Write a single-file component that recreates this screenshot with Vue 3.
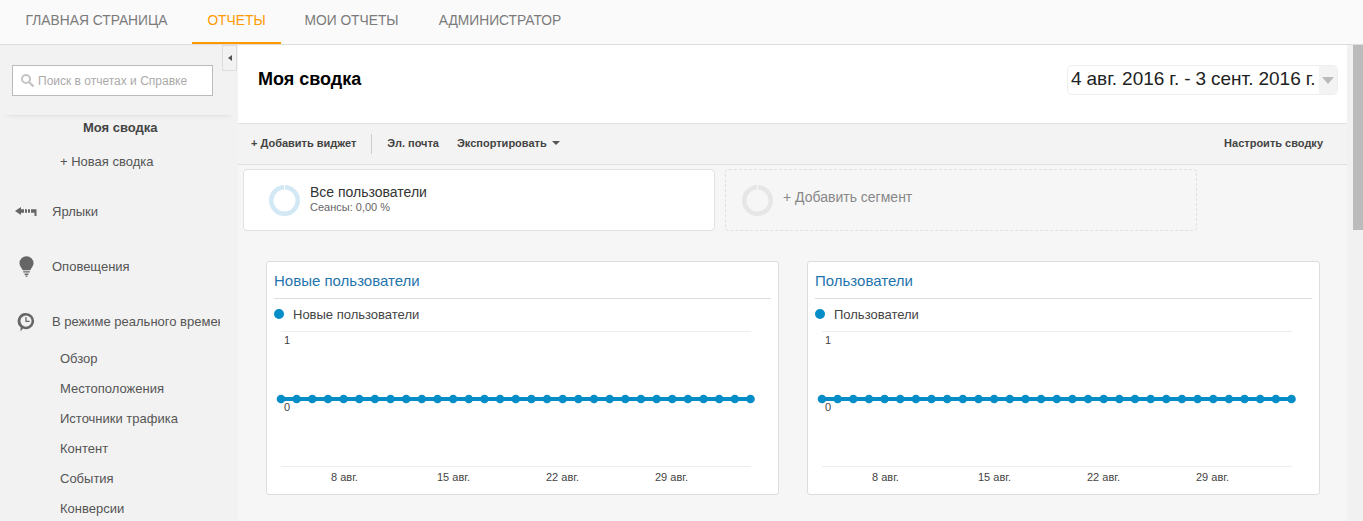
<script setup>
const sideTop = [
  { label: 'Ярлыки', icon: 'tag' },
  { label: 'Оповещения', icon: 'bulb' },
  { label: 'В режиме реального времени', icon: 'clock' }
];
const subItems = ['Обзор', 'Местоположения', 'Источники трафика', 'Контент', 'События', 'Конверсии'];
const nav = [
  { label: 'ГЛАВНАЯ СТРАНИЦА', width: 175 },
  { label: 'ОТЧЕТЫ', width: 89, active: true },
  { label: 'МОИ ОТЧЕТЫ', width: 125 },
  { label: 'АДМИНИСТРАТОР', width: 156 }
];

const widgets = ['Новые пользователи', 'Пользователи'];
const pointCount = 31;
const step = 15.65;
const points = Array.from({ length: pointCount }, (_, i) => 7 + i * step);
const ticks = [
  { label: '8 авг.', x: 57 },
  { label: '15 авг.', x: 163 },
  { label: '22 авг.', x: 272 },
  { label: '29 авг.', x: 381 }
];
</script>

<template>
  <div class="page">
    <header class="topnav">
      <a
        v-for="item in nav"
        :key="item.label"
        class="nav-item"
        :class="{ active: item.active }"
        :style="{ width: item.width + 'px' }"
      >{{ item.label }}</a>
    </header>

    <div class="body">
      <aside class="sidebar">
        <div class="search-wrap">
          <div class="search">
            <svg class="search-icon" width="15" height="15" viewBox="0 0 15 15">
              <circle cx="6" cy="6" r="4" fill="none" stroke="#c4c4c4" stroke-width="2" />
              <path d="M9 9l4.500 4.500" stroke="#c4c4c4" stroke-width="2.400" />
            </svg>
            <span>Поиск в отчетах и Справке</span>
          </div>
        </div>
        <button class="collapse"><span class="collapse-arrow"></span></button>

        <div class="side-current">Моя сводка</div>
        <div class="side-new">+ Новая сводка</div>

        <div v-for="item in sideTop" :key="item.label" class="side-row">
          <span class="side-icon">
            <svg v-if="item.icon === 'tag'" width="22" height="9" viewBox="0 0 22 9">
              <path d="M0 4l6-4v2.300h3v3.400H6V8z" fill="#666" />
              <path d="M10 2.300h2v3.400h-2zM13 2.300h2v3.400h-2zM16 2.300h5.500V9h-2V5.700H16z" fill="#666" />
            </svg>
            <svg v-else-if="item.icon === 'bulb'" width="15" height="21" viewBox="0 0 16 22">
              <path d="M8 0a7.500 7.500 0 0 1 7.500 7.500c0 3.400-2.600 5-3.500 7.500H4C3.100 12.500.5 10.900.5 7.500A7.500 7.500 0 0 1 8 0z" fill="#666" />
              <path d="M4.500 16h7v1.500h-7zM6 18.500h4V20H6zM7 20.500h2V22H7z" fill="#666" />
            </svg>
            <svg v-else width="18" height="20" viewBox="0 0 20 22">
              <path d="M10 1a9 9 0 1 1-3.500 17.300L4 21.500v-4.600A9 9 0 0 1 10 1z" fill="#666" />
              <circle cx="10" cy="10" r="6.200" fill="#f2f2f2" />
              <path d="M9.300 5.500h1.400v4h3.300v1.400H9.300z" fill="#666" />
            </svg>
          </span>
          <span class="side-label">{{ item.label }}</span>
        </div>

        <div v-for="item in subItems" :key="item" class="side-sub">{{ item }}</div>
      </aside>

      <main class="main">
        <section class="title-bar">
          <h1>Моя сводка</h1>
          <div class="date-picker">
            <span class="date-text">4 авг. 2016 г. - 3 сент. 2016 г.</span>
            <span class="date-arrow"><i></i></span>
          </div>
        </section>

        <section class="toolbar">
          <span class="tool tool-add">+ Добавить виджет</span>
          <span class="tool-divider"></span>
          <span class="tool tool-mail">Эл. почта</span>
          <span class="tool tool-export">Экспортировать <i class="caret"></i></span>
          <span class="tool tool-config">Настроить сводку</span>
        </section>

        <section class="segments">
          <div class="segment">
            <svg class="ring" width="31" height="31" viewBox="0 0 31 31">
              <circle cx="15.500" cy="15.500" r="13.250" fill="none" stroke="#d2e8f5" stroke-width="4.500" />
              <rect x="15" y="0" width="1" height="5" fill="#fff" />
            </svg>
            <div class="segment-text">
              <div class="segment-title">Все пользователи</div>
              <div class="segment-sub">Сеансы: 0,00 %</div>
            </div>
          </div>
          <div class="segment segment-add">
            <svg class="ring" width="31" height="31" viewBox="0 0 31 31">
              <circle cx="15.500" cy="15.500" r="13.250" fill="none" stroke="#e6e6e6" stroke-width="4.500" />
              <rect x="15" y="0" width="1" height="5" fill="#f6f6f6" />
            </svg>
            <div class="segment-add-label">+ Добавить сегмент</div>
          </div>
        </section>

        <section class="widgets">
          <article v-for="title in widgets" :key="title" class="widget">
            <h2 class="widget-title">{{ title }}</h2>
            <div class="legend"><span class="legend-dot"></span>{{ title }}</div>
            <div class="chart">
              <span class="y-label y-one">1</span>
              <span class="y-label y-zero">0</span>
              <svg class="chart-line" width="482" height="16" viewBox="0 0 482 16">
                <line x1="7" y1="8" :x2="points[points.length - 1]" y2="8" stroke="#058dc7" stroke-width="4" />
                <circle v-for="x in points" :key="x" :cx="x" cy="8" r="4.300" fill="#058dc7" />
              </svg>
            </div>
            <div class="x-axis">
              <span v-for="t in ticks" :key="t.label" class="x-label" :style="{ left: t.x + 'px' }">{{ t.label }}</span>
            </div>
          </article>
        </section>
      </main>

      <div class="scrollbar"><div class="scroll-thumb"></div></div>
    </div>
  </div>
</template>

<style scoped>
.page {
  width: 1363px;
  height: 521px;
  overflow: hidden;
  display: flex;
  flex-direction: column;
  font-family: Arial, "Liberation Sans", sans-serif;
  color: #444;
  background: #f6f6f6;
}

.topnav {
  height: 45px;
  flex-shrink: 0;
  box-sizing: border-box;
  display: flex;
  gap: 8px;
  padding-left: 9px;
  background: #fafafa;
  border-bottom: 1px solid #ddd;
}

.nav-item {
  height: 44px;
  box-sizing: border-box;
  padding-top: 13px;
  text-align: center;
  font-size: 13.800px;
  line-height: 15px;
  white-space: nowrap;
  color: #7a7a7a;
}

.nav-item.active {
  color: #f90;
  border-bottom: 2px solid #f90;
}

.body {
  flex: 1;
  display: flex;
  min-height: 0;
}

.sidebar {
  width: 238px;
  flex-shrink: 0;
  position: relative;
  background: #f2f2f2;
  overflow: hidden;
}

.search-wrap {
  height: 70px;
  box-sizing: border-box;
  padding: 20px 25px 0 12px;
  box-shadow: 0 6px 6px -7px rgba(0, 0, 0, 0.16);
}

.search {
  height: 31px;
  box-sizing: border-box;
  border: 1px solid #bbb;
  background: #fff;
  display: flex;
  align-items: center;
  padding-left: 7px;
  font-size: 12px;
  color: #aaa;
}

.search-icon {
  margin-right: 3px;
}

.collapse {
  position: absolute;
  left: 222px;
  top: 0;
  width: 15px;
  height: 26px;
  padding: 0;
  background: #f2f2f2;
  border: 1px solid #ddd;
  display: flex;
  align-items: center;
  justify-content: center;
}

.collapse-arrow {
  width: 0;
  height: 0;
  border-top: 3.500px solid transparent;
  border-bottom: 3.500px solid transparent;
  border-right: 4px solid #555;
}

.side-current {
  margin-top: 5px;
  padding-left: 83px;
  height: 16px;
  line-height: 16px;
  font-size: 13px;
  font-weight: bold;
  color: #444;
}

.side-new {
  margin-top: 18px;
  padding-left: 60px;
  height: 16px;
  line-height: 16px;
  font-size: 13px;
  color: #555;
}

.side-row {
  display: flex;
  align-items: center;
  height: 55px;
  white-space: nowrap;
}

.side-new + .side-row {
  margin-top: 14px;
}

.side-icon {
  width: 52px;
  flex-shrink: 0;
  display: flex;
  justify-content: center;
}

.side-label {
  width: 168px;
  overflow: hidden;
  font-size: 13px;
  color: #555;
}

.side-sub {
  height: 30px;
  line-height: 30px;
  padding-left: 60px;
  font-size: 13px;
  color: #555;
}

.side-row + .side-sub {
  margin-top: -5px;
}

.main {
  width: 1109px;
  flex-shrink: 0;
  background: #f6f6f6;
}

.title-bar {
  height: 79px;
  box-sizing: border-box;
  background: #fff;
  border-bottom: 1px solid #e0e0e0;
  display: flex;
  justify-content: space-between;
  padding: 20px 9px 0 20px;
}

.title-bar h1 {
  margin: 4px 0 0;
  font-size: 18px;
  line-height: 20px;
  font-weight: bold;
  color: #000;
}

.date-picker {
  width: 271px;
  height: 30px;
  box-sizing: border-box;
  display: flex;
  border: 1px solid #eee;
  border-radius: 5px;
  overflow: hidden;
  background: #fff;
}

.date-text {
  flex: 1;
  padding-left: 3px;
  font-size: 19px;
  word-spacing: -0.300px;
  line-height: 26px;
  color: #222;
  white-space: nowrap;
}

.date-arrow {
  width: 18px;
  flex-shrink: 0;
  background: #f3f3f3;
  display: flex;
  align-items: center;
  justify-content: center;
}

.date-arrow i {
  width: 0;
  height: 0;
  border-left: 6px solid transparent;
  border-right: 6px solid transparent;
  border-top: 7px solid #bbb;
}

.toolbar {
  height: 41px;
  box-sizing: border-box;
  background: #f3f3f3;
  border-bottom: 1px solid #e0e0e0;
  display: flex;
  align-items: center;
  padding-left: 13px;
}

.tool {
  margin-bottom: 2px;
  font-size: 11px;
  font-weight: bold;
  color: #444;
  white-space: nowrap;
}

.tool-divider {
  width: 1px;
  height: 20px;
  background: #ccc;
  margin: 0 15px;
}

.tool-export {
  margin-left: 18px;
}

.tool-config {
  margin-left: auto;
  margin-right: 24px;
}

.caret {
  display: inline-block;
  width: 0;
  height: 0;
  margin-left: 2px;
  vertical-align: 2px;
  border-left: 4px solid transparent;
  border-right: 4px solid transparent;
  border-top: 4px solid #555;
}

.segments {
  display: flex;
  gap: 10px;
  padding: 4px 0 0 5px;
}

.segment {
  width: 472px;
  height: 62px;
  box-sizing: border-box;
  background: #fff;
  border: 1px solid #e2e2e2;
  border-radius: 4px;
  display: flex;
  align-items: center;
  padding-left: 25px;
  gap: 10px;
}

.segment-add {
  background: transparent;
  border: 1px dashed #e0e0e0;
  padding-left: 16px;
}

.ring {
  flex-shrink: 0;
}

.segment-text {
  margin-bottom: 2px;
}

.segment-title {
  font-size: 14px;
  line-height: 16px;
  color: #333;
}

.segment-sub {
  font-size: 11px;
  line-height: 14px;
  color: #666;
}

.segment-add-label {
  margin-bottom: 7px;
  font-size: 14px;
  color: #888;
}

.widgets {
  display: flex;
  gap: 28px;
  padding: 30px 0 0 28px;
}

.widget {
  width: 513px;
  height: 234px;
  box-sizing: border-box;
  background: #fff;
  border: 1px solid #ddd;
  border-radius: 3px;
  padding: 0 7px;
  flex-shrink: 0;
}

.widget-title {
  margin: 0;
  height: 37px;
  box-sizing: border-box;
  padding-top: 10px;
  border-bottom: 1px solid #ddd;
  font-size: 15px;
  line-height: 17px;
  font-weight: normal;
  color: #1f74ad;
}

.legend {
  display: flex;
  align-items: center;
  height: 32px;
  box-sizing: border-box;
  padding-bottom: 2px;
  font-size: 13px;
  color: #444;
}

.legend-dot {
  width: 10px;
  height: 10px;
  border-radius: 50%;
  background: #058dc7;
  margin-right: 9px;
}

.chart {
  position: relative;
  height: 134px;
  margin-left: 7px;
  width: 470px;
  border-top: 1px solid #eee;
  border-bottom: 1px solid #eee;
}

.y-label {
  position: absolute;
  left: 3px;
  font-size: 11px;
  line-height: 12px;
  color: #444;
}

.y-one {
  top: 2px;
}

.y-zero {
  top: 69px;
}

.chart-line {
  position: absolute;
  left: -7px;
  top: 59px;
}

.x-axis {
  position: relative;
  height: 22px;
}

.x-label {
  position: absolute;
  top: 4px;
  font-size: 11px;
  line-height: 13px;
  color: #444;
  white-space: nowrap;
}

.scrollbar {
  flex: 1;
  background: #f1f1f1;
}

.scroll-thumb {
  width: 10px;
  height: 185px;
  margin-left: 6px;
  background: #bbb;
}
</style>

<style>
html,
body {
  margin: 0;
  padding: 0;
}
</style>
